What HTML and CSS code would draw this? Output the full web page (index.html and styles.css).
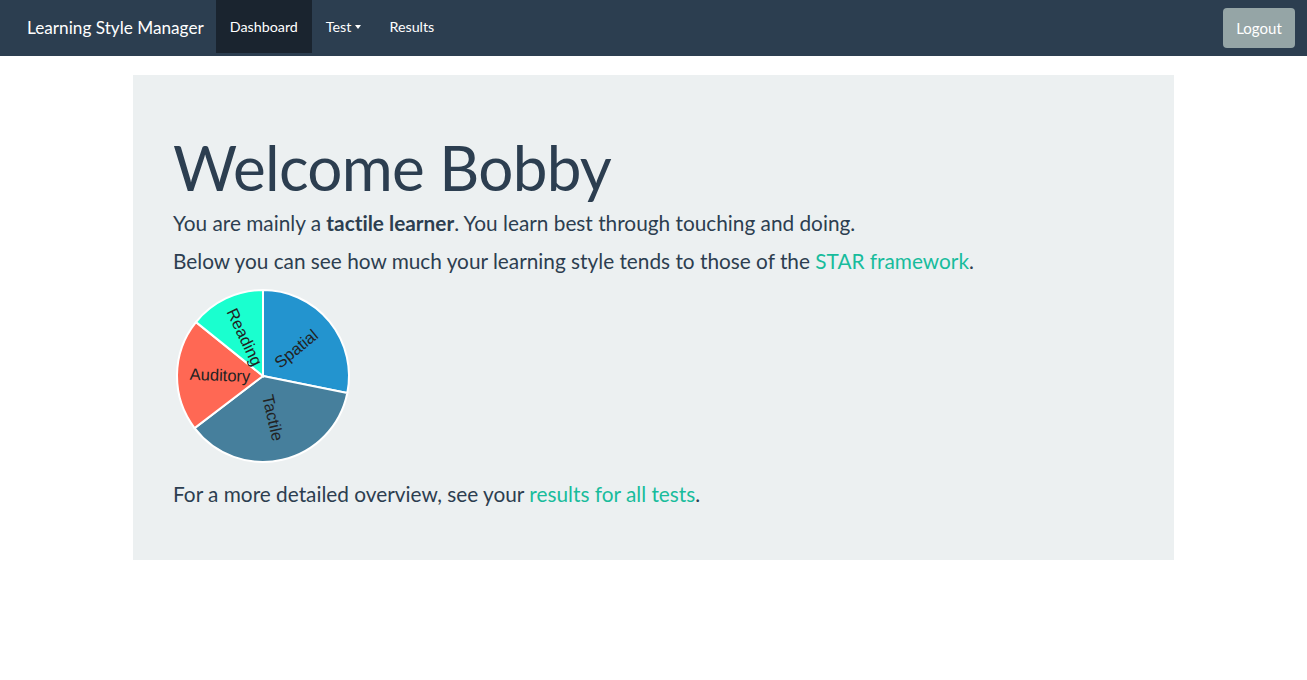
FILE: index.html
```html
<!DOCTYPE html>
<html>
<head>
<meta charset="utf-8">
<title>Learning Style Manager</title>
<link rel="stylesheet" href="styles.css">
</head>
<body>
<nav class="navbar">
  <div class="nav-left">
    <a class="brand" href="#">Learning Style Manager</a>
    <ul class="nav">
      <li class="active"><a href="#">Dashboard</a></li>
      <li><a href="#">Test <span class="caret"></span></a></li>
      <li><a href="#">Results</a></li>
    </ul>
  </div>
  <button class="btn-logout">Logout</button>
</nav>
<main class="container">
  <section class="jumbotron">
    <h1>Welcome Bobby</h1>
    <p>You are mainly a <strong>tactile learner</strong>. You learn best through touching and doing.</p>
    <p>Below you can see how much your learning style tends to those of the <a href="#">STAR framework</a>.</p>
    <svg class="pie" width="180" height="180" viewBox="0 0 180 180">
      <g transform="translate(90,89)" stroke="#fff" stroke-width="2">
        <path fill="#2394cf" d="M0,0 L0,-86 A86,86 0 0 1 84.3,17.0 Z"/>
        <path fill="#467f9c" d="M0,0 L84.3,17.0 A86,86 0 0 1 -68.4,52.1 Z"/>
        <path fill="#ff6854" d="M0,0 L-68.4,52.1 A86,86 0 0 1 -67.0,-53.9 Z"/>
        <path fill="#1affcf" d="M0,0 L-67.0,-53.9 A86,86 0 0 1 0,-86 Z"/>
      </g>
      <g transform="translate(90,89)" class="labels">
        <text transform="translate(33.3,-27.2) rotate(-39.3)" dy="5.5">Spatial</text>
        <text transform="translate(9.7,41.9) rotate(77)" dy="5.5">Tactile</text>
        <text transform="translate(-43,-0.6) rotate(2)" dy="5.5">Auditory</text>
        <text transform="translate(-18.6,-38.8) rotate(64.4)" dy="5.5">Reading</text>
      </g>
    </svg>
    <p>For a more detailed overview, see your <a href="#">results for all tests</a>.</p>
  </section>
</main>
</body>
</html>
```
FILE: styles.css
```css
* { box-sizing: border-box; }
html, body { margin: 0; padding: 0; }
body {
  font-family: Lato, "Open Sans", "Liberation Sans", sans-serif;
  font-size: 15px;
  color: #2c3e50;
  background: #fff;
  font-variant-ligatures: none;
}
a { color: #18bc9c; text-decoration: none; }
.navbar {
  height: 56px;
  background: #2c3e50;
  display: flex;
  align-items: center;
  justify-content: space-between;
  padding: 0 12px 0 27px;
}
.nav-left { display: flex; align-items: stretch; height: 100%; }
.brand {
  color: #fff;
  font-size: 17.2px;
  display: flex;
  align-items: center;
  margin-right: 12px;
  padding-bottom: 1px;
}
.nav { list-style: none; margin: 0; padding: 0; display: flex; height: 53px; }
.nav li { display: flex; }
.nav li a {
  color: #fff;
  font-size: 14.3px;
  display: flex;
  align-items: center;
  padding: 0 14px;
}
.nav li.active a { background: #1a242f; }
.caret {
  display: inline-block;
  width: 0; height: 0;
  margin-left: 4px;
  border-top: 4px solid #fff;
  border-left: 3px solid transparent;
  border-right: 3px solid transparent;
  vertical-align: middle;
}
.btn-logout {
  font-family: inherit;
  font-size: 15px;
  color: #fff;
  background: #95a5a6;
  border: none;
  border-radius: 4px;
  width: 72px;
  height: 40px;
  padding: 0;
}
.container { width: 1041px; margin: 19px auto 0; }
.jumbotron {
  background: #ecf0f1;
  padding: 48px 40px 42px;
}
.jumbotron h1 {
  font-size: 62px;
  letter-spacing: -0.7px;
  font-weight: 400;
  line-height: 1.1;
  margin: 10px 0 7px;
}
.jumbotron p {
  font-size: 20.8px;
  line-height: 1.4;
  margin: 0 0 9px;
}
.jumbotron p strong { font-weight: 700; }
.pie { display: block; margin: 12px 0 12px 0; }
.pie .labels text {
  font-family: "Liberation Sans", Arial, sans-serif;
  font-size: 16.5px;
  fill: #222;
  text-anchor: middle;
}
```
